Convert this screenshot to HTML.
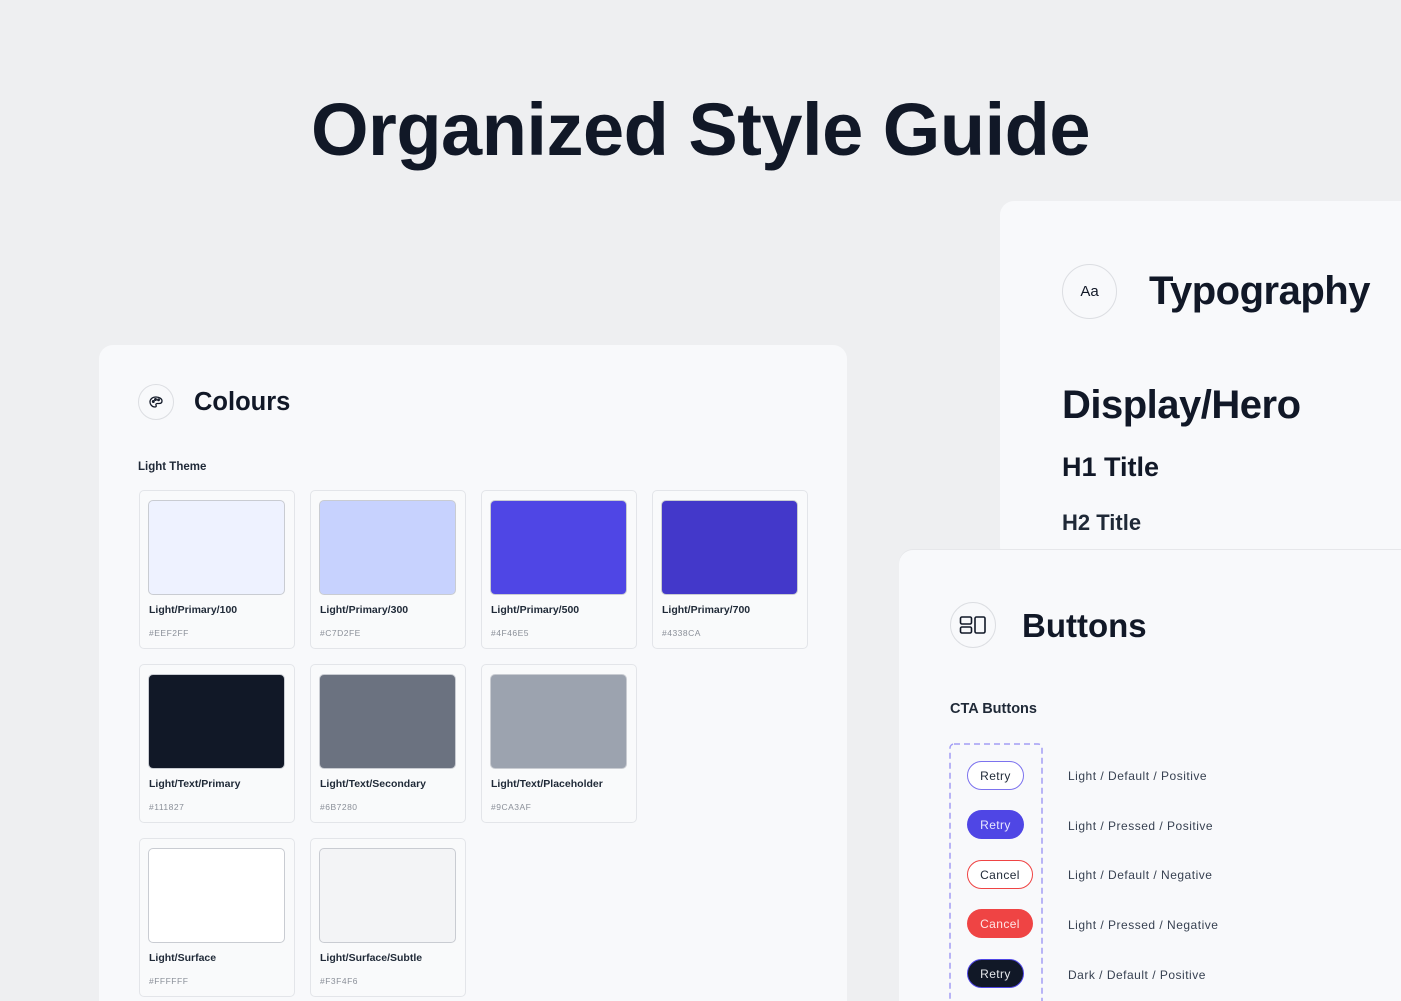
<!DOCTYPE html>
<html><head><meta charset="utf-8"><style>
*{margin:0;padding:0;box-sizing:border-box}
html,body{width:1401px;height:1001px;overflow:hidden}
body{background:#eeeff1;font-family:"Liberation Sans",sans-serif;color:#111827;position:relative}
.title{position:absolute;left:0;width:1401px;top:88px;text-align:center;font-size:74px;font-weight:bold;letter-spacing:-0.5px;line-height:84px}
.card{position:absolute;background:#f8f9fb;border-radius:14px}
.circ{position:absolute;border:1px solid #dcdee2;border-radius:50%;display:flex;align-items:center;justify-content:center;background:#f8f9fb}
.sw{position:absolute;width:156px;height:159px;border:1px solid #e3e5e9;border-radius:5px;background:#f9fafb}
.sw .c{position:absolute;left:8px;top:9px;width:137px;height:95px;border-radius:5px;border:1px solid #c9ccd2}
.sw .n{position:absolute;left:9px;top:113px;font-size:10.5px;font-weight:bold;color:#1f2937}
.sw .h{position:absolute;left:9px;top:137px;font-size:8.5px;color:#8a8f98;letter-spacing:.5px}
.btn{position:absolute;left:967px;height:29px;border-radius:15px;font-size:12px;display:flex;align-items:center;justify-content:center;letter-spacing:.4px}
.lbl{position:absolute;left:1068px;font-size:12px;color:#374151;letter-spacing:.5px}
</style></head><body>
<div class="title">Organized Style Guide</div>

<div class="card" style="left:99px;top:345px;width:748px;height:700px"></div>
<div class="circ" style="left:138px;top:384px;width:36px;height:36px">
<svg width="14" height="12" viewBox="0 0 14 12" fill="none" stroke="#111827" stroke-width="1.3"><path d="M7 1C3.5 1 1 3 1 6c0 2.5 2 5 5 5 1.3 0 1.5-1 1-1.8-.5-.9.2-1.7 1.2-1.7H10c2 0 3-1 3-2.5C13 2.8 10.5 1 7 1z"/><circle cx="4.3" cy="5.5" r=".8"/><circle cx="6.5" cy="3.5" r=".8"/><circle cx="9.5" cy="3.8" r=".8"/></svg></div>
<div style="position:absolute;left:194px;top:388px;font-size:25.5px;font-weight:bold">Colours</div>
<div style="position:absolute;left:138px;top:461px;font-size:11.5px;font-weight:bold;color:#1f2937">Light Theme</div>

<div class="sw" style="left:139px;top:490px"><div class="c" style="background:#eef2ff"></div><div class="n">Light/Primary/100</div><div class="h">#EEF2FF</div></div>
<div class="sw" style="left:310px;top:490px"><div class="c" style="background:#c7d2fe"></div><div class="n">Light/Primary/300</div><div class="h">#C7D2FE</div></div>
<div class="sw" style="left:481px;top:490px"><div class="c" style="background:#4f46e5"></div><div class="n">Light/Primary/500</div><div class="h">#4F46E5</div></div>
<div class="sw" style="left:652px;top:490px"><div class="c" style="background:#4338ca"></div><div class="n">Light/Primary/700</div><div class="h">#4338CA</div></div>
<div class="sw" style="left:139px;top:664px"><div class="c" style="background:#111827"></div><div class="n">Light/Text/Primary</div><div class="h">#111827</div></div>
<div class="sw" style="left:310px;top:664px"><div class="c" style="background:#6b7280"></div><div class="n">Light/Text/Secondary</div><div class="h">#6B7280</div></div>
<div class="sw" style="left:481px;top:664px"><div class="c" style="background:#9ca3af"></div><div class="n">Light/Text/Placeholder</div><div class="h">#9CA3AF</div></div>
<div class="sw" style="left:139px;top:838px"><div class="c" style="background:#ffffff"></div><div class="n">Light/Surface</div><div class="h">#FFFFFF</div></div>
<div class="sw" style="left:310px;top:838px"><div class="c" style="background:#f3f4f6"></div><div class="n">Light/Surface/Subtle</div><div class="h">#F3F4F6</div></div>

<div class="card" style="left:1000px;top:201px;width:430px;height:360px"></div>
<div class="circ" style="left:1062px;top:264px;width:55px;height:55px;font-size:15px">Aa</div>
<div style="position:absolute;left:1149px;top:269px;font-size:40px;font-weight:bold;letter-spacing:-.5px">Typography</div>
<div style="position:absolute;left:1062px;top:383px;font-size:40px;font-weight:bold;letter-spacing:-.5px">Display/Hero</div>
<div style="position:absolute;left:1062px;top:452px;font-size:27px;font-weight:bold">H1 Title</div>
<div style="position:absolute;left:1062px;top:510px;font-size:22px;font-weight:bold;color:#1f2937">H2 Title</div>

<div class="card" style="left:899px;top:550px;width:540px;height:500px;box-shadow:0 -1px 0 #e6e7ea"></div>
<div class="circ" style="left:950px;top:602px;width:46px;height:46px">
<svg width="28" height="20" viewBox="0 0 28 20" fill="none" stroke="#111827" stroke-width="1.6"><rect x="1.5" y="2" width="11" height="7" rx="1.5"/><rect x="1.5" y="12" width="11" height="6" rx="1.5"/><rect x="16" y="2" width="10" height="16" rx="1.5"/></svg></div>
<div style="position:absolute;left:1022px;top:607px;font-size:33px;font-weight:bold">Buttons</div>
<div style="position:absolute;left:950px;top:701px;font-size:14.5px;font-weight:bold;color:#1f2937">CTA Buttons</div>
<svg style="position:absolute;left:949px;top:743px" width="96" height="270"><rect x="1" y="1" width="92" height="300" rx="4" fill="none" stroke="#a39ef5" stroke-width="1.5" stroke-dasharray="6 4"/></svg>

<div class="btn" style="top:761px;width:57px;border:1px solid #7c72ee;background:#fff;color:#1f2937">Retry</div>
<div class="btn" style="top:810px;width:57px;background:#4f46e5;color:#e8e8ff">Retry</div>
<div class="btn" style="top:860px;width:66px;border:1px solid #ef4444;background:#fff;color:#1f2937">Cancel</div>
<div class="btn" style="top:909px;width:66px;background:#ef4444;color:#ffe6e6">Cancel</div>
<div class="btn" style="top:959px;width:57px;background:#111827;border:1px solid #4f46e5;color:#e5e7eb">Retry</div>

<div class="lbl" style="top:769px">Light / Default / Positive</div>
<div class="lbl" style="top:819px">Light / Pressed / Positive</div>
<div class="lbl" style="top:868px">Light / Default / Negative</div>
<div class="lbl" style="top:918px">Light / Pressed / Negative</div>
<div class="lbl" style="top:968px">Dark / Default / Positive</div>
</body></html>
